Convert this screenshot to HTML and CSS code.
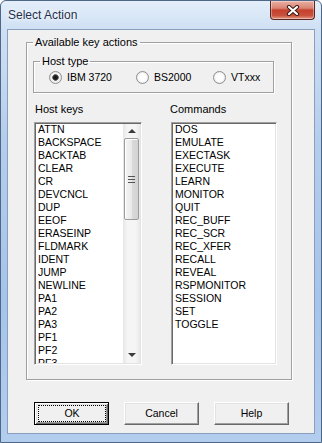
FILE: index.html
```html
<!DOCTYPE html>
<html lang="en">
<head>
    <meta charset="UTF-8">
    <title>Select Action</title>
    <link rel="stylesheet" href="styles.css">
</head>
<body>

<div class="window">
    <div class="titlebar">
        <span class="title">Select Action</span>
        <div class="close-btn">
            <svg width="14" height="11" viewBox="0 0 14 11">
                <path d="M3 2 L11 9 M11 2 L3 9" stroke="#3a1a16" stroke-width="4.2" stroke-linecap="round"/>
                <path d="M3 2 L11 9 M11 2 L3 9" stroke="#ffffff" stroke-width="2.2" stroke-linecap="round"/>
            </svg>
        </div>
    </div>

    <div class="client">
        <fieldset class="group actions">
            <legend>Available key actions</legend>

            <fieldset class="group host-type">
                <legend>Host type</legend>
                <div class="radios">
                    <label class="radio checked"><span class="radio-dot"></span>IBM 3720</label>
                    <label class="radio"><span class="radio-dot"></span>BS2000</label>
                    <label class="radio"><span class="radio-dot"></span>VTxxx</label>
                </div>
            </fieldset>

            <div class="lists">
                <div class="list-col host-keys">
                    <div class="list-label">Host keys</div>
                    <div class="listbox">
                        <div class="items" id="hostKeys"></div>
                        <div class="scrollbar">
                            <div class="sb-btn sb-up"><span class="arrow-up"></span></div>
                            <div class="sb-thumb"><span class="grip"></span></div>
                            <div class="sb-track"></div>
                            <div class="sb-btn sb-down"><span class="arrow-down"></span></div>
                        </div>
                    </div>
                </div>
                <div class="list-col commands">
                    <div class="list-label">Commands</div>
                    <div class="listbox">
                        <div class="items" id="commands"></div>
                    </div>
                </div>
            </div>
        </fieldset>

        <div class="buttons">
            <div class="btn btn-default"><span class="focus">OK</span></div>
            <div class="btn">Cancel</div>
            <div class="btn">Help</div>
        </div>
    </div>
</div>

<script>
    const hostKeys = [
        'ATTN', 'BACKSPACE', 'BACKTAB', 'CLEAR', 'CR', 'DEVCNCL', 'DUP', 'EEOF', 'ERASEINP',
        'FLDMARK', 'IDENT', 'JUMP', 'NEWLINE', 'PA1', 'PA2', 'PA3', 'PF1', 'PF2', 'PF3'
    ];

    const commands = [
        'DOS', 'EMULATE', 'EXECTASK', 'EXECUTE', 'LEARN', 'MONITOR', 'QUIT', 'REC_BUFF',
        'REC_SCR', 'REC_XFER', 'RECALL', 'REVEAL', 'RSPMONITOR', 'SESSION', 'SET', 'TOGGLE'
    ];

    function fillList(id, names) {
        const list = document.getElementById(id);
        names.forEach(name => {
            const item = document.createElement('div');
            item.classList.add('item');
            item.textContent = name;
            list.appendChild(item);
        });
    }

    fillList('hostKeys', hostKeys);
    fillList('commands', commands);
</script>

</body>
</html>
```

FILE: styles.css
```css
body {
    margin: 0;
    padding: 0;
    font-family: "Liberation Sans", Arial, sans-serif;
    font-size: 11px;
    color: #000;
    background-color: #fff;
}

.window {
    width: 322px;
    height: 443px;
    box-sizing: border-box;
    border: 1px solid #4f6787;
    border-radius: 6px 6px 0 0;
    background: linear-gradient(to bottom, #e4eefa, #cfe0f4 28px, #b4cdec 140px, #a6c4ea 300px, #b3cdee);
    display: flex;
    flex-direction: column;
}

.titlebar {
    height: 28px;
    display: flex;
    justify-content: space-between;
    align-items: flex-start;
    padding-left: 7px;
    flex-shrink: 0;
}

.title {
    font-size: 12px;
    line-height: 28px;
    color: #1e2f4d;
    text-shadow: 0 0 6px #fff, 0 0 3px #fff;
}

.close-btn {
    width: 45px;
    height: 19px;
    margin-right: 6px;
    box-sizing: border-box;
    border: 1px solid #5a2620;
    border-top: none;
    border-radius: 0 0 4px 4px;
    background: linear-gradient(to bottom, #eab0a4, #d98473 40%, #c4412d 50%, #c9503b 80%, #e29a87);
    box-shadow: inset 0 0 0 1px rgba(255, 255, 255, 0.35);
    display: flex;
    align-items: center;
    justify-content: center;
}

.client {
    flex: 1;
    margin: 0 6px 8px 6px;
    border: 1px solid #8a9fbd;
    background-color: #f0f0f0;
    padding: 0 0 0 18px;
}

/* group boxes */
.group {
    margin: 0;
    border: 1px solid #a0a0a0;
    box-shadow: 1px 1px 0 #fff, inset 1px 1px 0 #fff;
    min-width: 0;
}

.group legend {
    line-height: 13px;
    padding: 0 2px;
    margin-left: 0;
}

.actions {
    width: 266px;
    box-sizing: border-box;
    margin-top: 6px;
    padding: 6px 14px 14px 6px;
}

.host-type {
    width: 241px;
    height: 38px;
    box-sizing: border-box;
    padding: 3px 0 0 6px;
}

.radios {
    display: grid;
    grid-template-columns: 87px 77px auto;
    margin-left: 9px;
}

.radio {
    display: flex;
    align-items: center;
    gap: 5px;
    line-height: 13px;
    font-size: 10.5px;
}

.radio-dot {
    width: 13px;
    height: 13px;
    box-sizing: border-box;
    border-radius: 50%;
    border: 1px solid #8f8f8f;
    background: radial-gradient(circle, #ffffff 45%, #e2e2e2 80%, #cfcfcf);
}

.radio.checked .radio-dot {
    background: radial-gradient(circle, #111 0, #222 2px, #6a6a6a 3px, #f6f6f6 3.6px, #e2e2e2 80%, #cfcfcf);
}

/* lists */
.lists {
    display: flex;
    gap: 29px;
    margin-top: 10px;
}

.list-label {
    line-height: 13px;
    margin-bottom: 6px;
}

.host-keys {
    margin-left: 1px;
}

.host-keys .list-label {
    padding-left: 1px;
}

.commands .list-label {
    margin-left: -1px;
}

.listbox {
    height: 243px;
    box-sizing: border-box;
    border: 1px solid;
    border-color: #a0a0a0 #fff #fff #a0a0a0;
    box-shadow: inset 1px 1px 0 #696969, inset -1px -1px 0 #e3e3e3;
    background-color: #fff;
    padding: 1px;
    display: flex;
    overflow: hidden;
}

.host-keys .listbox {
    width: 108px;
}

.commands .listbox {
    width: 106px;
}

.items {
    flex: 1;
    overflow: hidden;
    padding-left: 2px;
    margin-top: -1px;
}

.item {
    line-height: 13px;
    font-size: 10.5px;
    white-space: nowrap;
}

/* scrollbar */
.scrollbar {
    width: 17px;
    display: flex;
    flex-direction: column;
    background: linear-gradient(to right, #e6e6e6, #f5f5f5 25%, #f5f5f5 75%, #e8e8e8);
}

.sb-btn {
    display: flex;
    align-items: center;
    justify-content: center;
    flex-shrink: 0;
}

.sb-up {
    height: 14px;
}

.sb-down {
    height: 17px;
}

.arrow-up {
    width: 0;
    height: 0;
    border-left: 4px solid transparent;
    border-right: 4px solid transparent;
    border-bottom: 4px solid #3c3c3c;
}

.arrow-down {
    width: 0;
    height: 0;
    border-left: 4px solid transparent;
    border-right: 4px solid transparent;
    border-top: 4px solid #3c3c3c;
}

.sb-thumb {
    height: 82px;
    margin: 0 1px;
    box-sizing: border-box;
    border: 1px solid #9b9b9b;
    border-radius: 2px;
    background: linear-gradient(to right, #f5f5f5, #e9e9e9 50%, #dadada 50%, #d2d2d2);
    box-shadow: inset 1px 1px 0 #fff;
    display: flex;
    align-items: center;
    justify-content: center;
    flex-shrink: 0;
}

.grip {
    width: 7px;
    height: 5px;
    border-top: 1px solid #555;
    border-bottom: 1px solid #555;
    background: linear-gradient(to bottom, transparent 2px, #555 2px, #555 3px, transparent 3px);
}

.sb-track {
    flex: 1;
}

/* buttons */
.buttons {
    display: flex;
    gap: 15px;
    margin-top: 22px;
    margin-left: 8px;
}

.btn {
    width: 75px;
    height: 23px;
    box-sizing: border-box;
    border: 1px solid;
    border-color: #fff #696969 #696969 #fff;
    box-shadow: inset -1px -1px 0 #a0a0a0, inset 1px 1px 0 #e3e3e3;
    background-color: #f0f0f0;
    display: flex;
    align-items: center;
    justify-content: center;
    line-height: 13px;
    font-size: 10.5px;
}

.btn-default {
    border: 1px solid #000;
    box-shadow: inset 1px 1px 0 #fff, inset -1px -1px 0 #696969, inset 2px 2px 0 #e3e3e3, inset -2px -2px 0 #a0a0a0;
    align-items: stretch;
}

.focus {
    flex: 1;
    margin: 2px 2px 2px 3px;
    border: 1px dotted #000;
    display: flex;
    align-items: center;
    justify-content: center;
}
```
